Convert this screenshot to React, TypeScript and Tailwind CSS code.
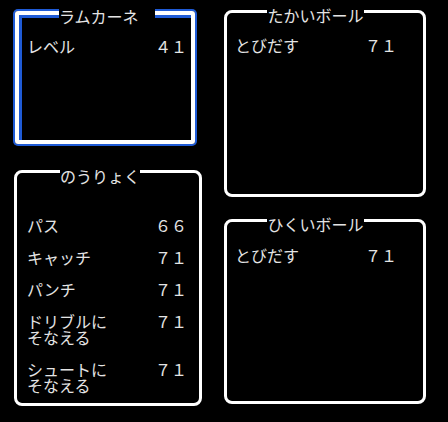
import React from "react";

const font = { fontFamily: '"Noto Sans CJK JP", "Noto Sans", sans-serif' };

function Row({ label, value, labelW }: { label: React.ReactNode; value?: string; labelW: string }) {
  return (
    <div className="flex leading-[16px] whitespace-nowrap">
      <div className={`${labelW} shrink-0`}>{label}</div>
      {value && <div className="shrink-0">{value}</div>}
    </div>
  );
}

function TwoLine({ a, b }: { a: string; b: string }) {
  return (
    <div className="leading-[16px]">
      {a}
      <br />
      {b}
    </div>
  );
}

export default function App() {
  return (
    <div
      className="w-full h-[422px] bg-black flex text-[16px] leading-[16px] text-[#e4e4e4] overflow-hidden"
      style={font}
    >
      {/* left column */}
      <div className="flex flex-col w-[202px] shrink-0">
        <div className="relative ml-[15px] mt-[11px] w-[180px] h-[133px] shrink-0 border-[4px] border-white rounded-[3px] shadow-[0_0_0_2px_#1f5bd6,inset_3px_3px_0_#1f5bd6] pt-[23px] pl-[8px]">
          <div className="absolute left-[40px] top-[-8px] w-[96px] h-[18px] bg-black leading-[16px] pt-[1px]">ラムカーネ</div>
          <Row label="レベル" value="４１" labelW="w-[128px]" />
        </div>
        <div className="relative ml-[14px] mt-[26px] w-[188px] h-[236px] shrink-0 border-[3px] border-white rounded-[8px] pt-[44px] pl-[10px] flex flex-col gap-4">
          <div className="absolute left-[43px] top-[-6px] w-[80px] h-[17px] bg-black pt-[0.5px]">のうりょく</div>
          <Row label="パス" value="６６" labelW="w-[128px]" />
          <Row label="キャッチ" value="７１" labelW="w-[128px]" />
          <Row label="パンチ" value="７１" labelW="w-[128px]" />
          <Row label={<TwoLine a="ドリブルに" b="そなえる" />} value="７１" labelW="w-[128px]" />
          <Row label={<TwoLine a="シュートに" b="そなえる" />} value="７１" labelW="w-[128px]" />
        </div>
      </div>

      {/* right column */}
      <div className="flex flex-col ml-[22px] w-[202px] shrink-0">
        <div className="relative mt-[10px] w-[202px] h-[187px] shrink-0 border-[3px] border-white rounded-[8px] pt-[24px] pl-[8px]">
          <div className="absolute left-[40px] top-[-6px] w-[97px] h-[17px] bg-black text-center">たかいボール</div>
          <Row label="とびだす" value="７１" labelW="w-[130px]" />
        </div>
        <div className="relative mt-[22px] w-[202px] h-[185px] shrink-0 border-[3px] border-white rounded-[8px] pt-[25px] pl-[8px]">
          <div className="absolute left-[40px] top-[-6px] w-[97px] h-[17px] bg-black text-center">ひくいボール</div>
          <Row label="とびだす" value="７１" labelW="w-[130px]" />
        </div>
      </div>
    </div>
  );
}
